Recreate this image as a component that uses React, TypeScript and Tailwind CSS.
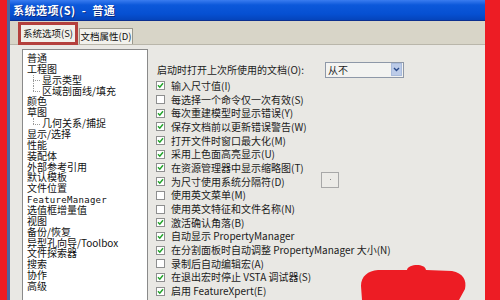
import React from "react";

const FONT = { fontFamily: '"Noto Sans CJK SC", "Liberation Sans", sans-serif' };

type TreeItem = { label: string; child?: "first" | "last"; latin?: boolean };

const tree: TreeItem[] = [
  { label: "普通" },
  { label: "工程图" },
  { label: "显示类型", child: "first" },
  { label: "区域剖面线/填充", child: "last" },
  { label: "颜色" },
  { label: "草图" },
  { label: "几何关系/捕捉", child: "last" },
  { label: "显示/选择" },
  { label: "性能" },
  { label: "装配体" },
  { label: "外部参考引用" },
  { label: "默认模板" },
  { label: "文件位置" },
  { label: "FeatureManager", latin: true },
  { label: "选值框增量值" },
  { label: "视图" },
  { label: "备份/恢复" },
  { label: "异型孔向导/Toolbox" },
  { label: "文件探索器" },
  { label: "搜索" },
  { label: "协作" },
  { label: "高级" },
];

const options: { label: string; checked: boolean; box?: boolean }[] = [
  { label: "输入尺寸值(I)", checked: true },
  { label: "每选择一个命令仅一次有效(S)", checked: false },
  { label: "每次重建模型时显示错误(Y)", checked: true },
  { label: "保存文档前以更新错误警告(W)", checked: true },
  { label: "打开文件时窗口最大化(M)", checked: true },
  { label: "采用上色面高亮显示(U)", checked: true },
  { label: "在资源管理器中显示缩略图(T)", checked: true },
  { label: "为尺寸使用系统分隔符(D)", checked: true, box: true },
  { label: "使用英文菜单(M)", checked: false },
  { label: "使用英文特征和文件名称(N)", checked: false },
  { label: "激活确认角落(B)", checked: true },
  { label: "自动显示 PropertyManager", checked: true },
  { label: "在分割面板时自动调整 PropertyManager 大小(N)", checked: true },
  { label: "录制后自动编辑宏(A)", checked: false },
  { label: "在退出宏时停止 VSTA 调试器(S)", checked: true },
  { label: "启用 FeatureXpert(E)", checked: true },
];

function CheckBox({ checked }: { checked: boolean }) {
  return (
    <span className="w-[9px] h-[9px] border border-[#8e8f8f] bg-white flex items-center justify-center shrink-0">
      {checked && (
        <svg width="7" height="7" viewBox="0 0 7 7">
          <path d="M1 3.3 L2.8 5.2 L6 1.3" stroke="#22a32a" strokeWidth="1.5" fill="none" />
        </svg>
      )}
    </span>
  );
}

export default function App() {
  return (
    <div className="relative w-[500px] h-[300px] overflow-hidden flex bg-[#e9e8e4]" style={FONT}>
      <div className="w-[7px] h-full bg-[#ed1c24] shrink-0" />
      <div className="w-[3px] h-full bg-[#4a66a0] shrink-0" />
      <div className="flex-1 flex flex-col min-w-0 overflow-hidden">
        {/* title bar */}
        <div className="h-[20px] shrink-0 bg-[linear-gradient(to_bottom,#3a7cf0_0%,#0c58da_25%,#0650d2_70%,#0544bb_100%)] flex items-center pl-[3px]">
          <span className="text-white font-bold text-[11px] leading-none tracking-[0.5px] whitespace-nowrap [text-shadow:1px_1px_0_#0a2a80]">
            系统选项(S)&nbsp;&nbsp;-&nbsp;&nbsp;普通
          </span>
        </div>
        <div className="h-[1px] shrink-0 bg-[#0b2f8f]" />
        {/* tabs */}
        <div className="h-[24px] shrink-0 bg-[#d8d5c8] flex items-end pl-[8px] border-b border-[#b9b6aa]">
          <div className="w-[60px] h-[23px] border-[3px] border-[#b4403c] bg-[#f1f0ea] flex items-center justify-center -mb-[1px]">
            <span className="text-[9.5px] text-[#111] leading-none whitespace-nowrap">系统选项(S)</span>
          </div>
          <div className="ml-[1px] w-[54px] h-[16px] border border-[#9a988c] border-b-0 bg-[#f2f1ec] flex items-center justify-center">
            <span className="text-[9.5px] text-[#111] leading-none whitespace-nowrap">文档属性(D)</span>
          </div>
        </div>
        {/* content */}
        <div className="flex-1 flex pt-[4px] pl-[12px] min-h-0">
          <div className="w-[126px] h-[270px] bg-white border border-[#8a8a8a] pt-[3px] pl-[4px] shrink-0">
            {tree.map((t, i) => (
              <div
                key={i}
                className={`relative h-[10.86px] leading-[10.86px] text-[10px] text-[#111] whitespace-nowrap ${t.child ? "pl-[15px]" : ""}`}
              >
                {t.child && (
                  <>
                    <span
                      className={`absolute left-[6px] top-0 border-l border-dotted border-[#9a9a9a] ${t.child === "first" ? "h-full" : "h-1/2"}`}
                    />
                    <span className="absolute left-[6px] top-1/2 w-[7px] border-t border-dotted border-[#9a9a9a]" />
                  </>
                )}
                <span
                  className={t.latin ? "text-[9px] tracking-[0.3px] leading-[10.86px]" : "leading-[10.86px]"}
                  style={t.latin ? { fontFamily: '"DejaVu Sans Mono", monospace' } : undefined}
                >
                  {t.label}
                </span>
              </div>
            ))}
          </div>
          <div className="flex-1 pl-[8px] pt-[12px] text-[#1b1b1b]">
            <div className="flex items-center h-[17px]">
              <span className="w-[169px] text-[10px] leading-none pl-[1px] whitespace-nowrap">启动时打开上次所使用的文档(O):</span>
              <div className="w-[79px] h-[16px] border border-[#8e98a8] bg-[#f3f3f1] flex items-center justify-between pl-[2px] pr-[1px]">
                <span className="text-[10px] leading-none">从不</span>
                <span className="w-[11px] h-[13px] bg-[#bccbe8] border border-[#a9bbdc] flex items-center justify-center">
                  <svg width="7" height="5" viewBox="0 0 7 5">
                    <path d="M1 1 L3.5 3.5 L6 1" stroke="#2a4a8a" strokeWidth="1.4" fill="none" />
                  </svg>
                </span>
              </div>
            </div>
            <div className="pt-[1px]">
              {options.map((o, i) => (
                <div key={i} className="relative flex items-center h-[13.7px]">
                  <CheckBox checked={o.checked} />
                  <span className="ml-[6px] text-[10px] leading-none whitespace-nowrap">{o.label}</span>
                  {o.box && (
                    <span className="absolute left-[165px] top-[-3px] w-[18px] h-[16px] border border-[#a8a8a8] bg-[#ecebe7] flex items-center justify-center">
                      <span className="w-[1px] h-[1px] bg-[#888]" />
                    </span>
                  )}
                </div>
              ))}
            </div>
          </div>
        </div>
      </div>
      <div className="w-[15px] h-full bg-[#ed1c24] shrink-0" />
      <svg className="absolute left-0 top-0 pointer-events-none" width="500" height="300" viewBox="0 0 500 300">
        <path
          d="M362 300 L361 286 C361 276 368 271 378 270 L407 270 C408 264 425 263 426 270 L452 271 C463 273 467 280 465 289 L459 300 Z"
          fill="#ed1c24"
        />
      </svg>
    </div>
  );
}
